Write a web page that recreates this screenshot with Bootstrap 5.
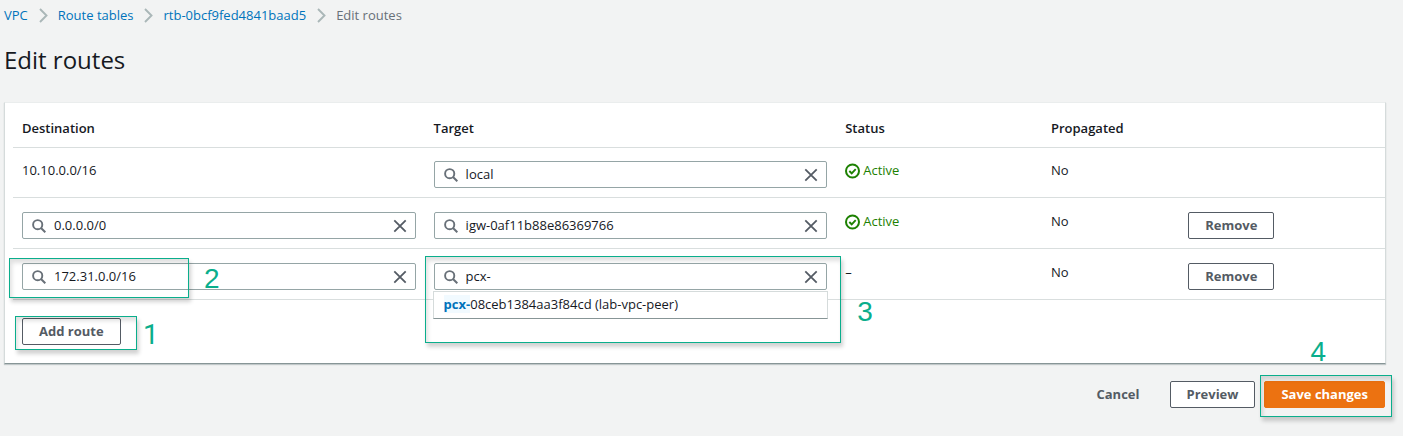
<!DOCTYPE html>
<html lang="en">
<head>
<meta charset="utf-8">
<meta name="viewport" content="width=device-width, initial-scale=1">
<title>Edit routes</title>
<link href="https://cdn.jsdelivr.net/npm/bootstrap@5.3.0/dist/css/bootstrap.min.css" rel="stylesheet">
<style>
  body { background: #f2f3f3; color: #16191f; font-family: "Open Sans", "Noto Sans", sans-serif; font-size: 13px; line-height: 18px; }
  .page { padding: 6px 17px 0 4px; }
  a { color: #0073bb; text-decoration: none; }
  .breadcrumb { --bs-breadcrumb-item-padding-x: 0; font-size: 13px; gap: 10px; }
  .breadcrumb-item + .breadcrumb-item::before { content: none; }
  .breadcrumb-item { display: flex; align-items: center; gap: 11px; }
  .breadcrumb-item.active { color: #687078; }
  .page-title { font-size: 24px; line-height: 36px; font-weight: 400; margin: 18px 0 24px; }
  .panel { background: #fff; border: 1px solid #d5dbdb; border-top-color: #eaeded; border-bottom-color: #879596; box-shadow: 0 1px 1px rgba(0,28,36,.2); padding-left: 8px; }
  .routes { --bs-table-bg: transparent; color: #16191f; table-layout: fixed; }
  .routes > :not(caption) > * > * { padding: 14px 9px 9px; border-bottom: 1px solid #d9dede; color: #16191f; }
  .routes > thead > tr > th { padding: 16px 9px 10px; font-weight: 600; }
  .routes > tbody > tr:first-child > td { padding-top: 13px; }
  .w-wide { width: 30%; } .w-mid { width: 15%; } .w-slim { width: 10%; }
  .search { border: 1px solid #95a5a6; border-radius: 2px; height: 27px; background: #fff; padding: 0 8px 0 9px; }
  .search input { border: 0; outline: 0; background: transparent; padding: 0 0 2px; color: #16191f; min-width: 0; line-height: 18px; }
  .search button { border: 0; background: transparent; padding: 0; display: flex; color: #545b64; }
  .btn { --bs-btn-font-size: 13px; --bs-btn-line-height: 18px; --bs-btn-font-weight: 700; --bs-btn-border-radius: 2px; --bs-btn-padding-y: 3px; --bs-btn-padding-x: 16px; --bs-btn-color: #545b64; height: 27px; padding-top: 2px; }
  .btn-plain { --bs-btn-border-color: #545b64; --bs-btn-bg: #fff; --bs-btn-hover-bg: #fafafa; }
  .btn-orange { --bs-btn-color: #fff; --bs-btn-bg: #ec7211; --bs-btn-border-color: #ec7211; --bs-btn-hover-bg: #eb5f07; --bs-btn-hover-color: #fff; }
  .add-row { padding: 18px 9px; }
  .actions { gap: 9px; padding: 17px 1px 18px 0; }
  .ok { color: #1d8102; gap: 2px; }
  .ok svg { margin-top: 2px; }
  .suggest { position: absolute; top: 28px; left: -1px; right: -1px; z-index: 2; background: #fff; border: 1px solid #d5dbdb; border-bottom-color: #879596; padding: 3px 10px 5px; }
  .suggest b { color: #0073bb; background: #f1faff; }
  .callout { position: absolute; border: 1px solid #0aae8c; box-shadow: 2px 4px 4px rgba(0,0,0,.18), inset 2px 4px 4px rgba(0,0,0,.12); pointer-events: none; z-index: 3; }
  .callout span { position: absolute; font: 28px/32px "Liberation Sans", Arial, sans-serif; color: #0aae8c; }
  .callout-add { inset: -2px -16px -5px -7px; }
  .callout-add span { left: 127px; top: 2px; font-family: Roboto, Arial, sans-serif; }
  .callout-dest { top: -5px; left: -13px; width: 180px; height: 40px; }
  .callout-dest span { left: 194px; top: 4px; }
  .callout-target { inset: -7px -14px -53px -9px; }
  .callout-target span { left: 100%; margin-left: 17px; top: 39px; }
  .callout-save { inset: -6px -7px -9px -4px; }
  .callout-save span { left: 49px; top: -40px; }
</style>
</head>
<body>
<svg class="d-none" aria-hidden="true">
  <symbol id="i-search" viewBox="0 0 14 14"><circle cx="5.7" cy="5.7" r="4.6" fill="none" stroke="#687078" stroke-width="1.9"/><path d="M9 9l4.3 4.3" stroke="#687078" stroke-width="2"/></symbol>
  <symbol id="i-close" viewBox="0 0 14 14"><path d="M1.3 1.3l11.4 11.4M12.7 1.3L1.3 12.7" stroke="#545b64" stroke-width="1.8"/></symbol>
  <symbol id="i-check" viewBox="0 0 16 16"><circle cx="7.5" cy="8" r="6.5" fill="none" stroke="#1d8102" stroke-width="2"/><path d="M4.3 8l2.4 2.3 4-4.2" fill="none" stroke="#1d8102" stroke-width="1.9"/></symbol>
  <symbol id="i-sep" viewBox="0 0 9 15"><path d="M1 1l6.5 6.5L1 14" fill="none" stroke="#aab7b8" stroke-width="1.9"/></symbol>
</svg>
<main class="page">
  <nav aria-label="Breadcrumb">
    <ol class="breadcrumb mb-0">
      <li class="breadcrumb-item"><a href="#">VPC</a><svg width="9" height="15"><use href="#i-sep"/></svg></li>
      <li class="breadcrumb-item"><a href="#">Route tables</a><svg width="9" height="15"><use href="#i-sep"/></svg></li>
      <li class="breadcrumb-item"><a href="#">rtb-0bcf9fed4841baad5</a><svg width="9" height="15"><use href="#i-sep"/></svg></li>
      <li class="breadcrumb-item active" aria-current="page">Edit routes</li>
    </ol>
  </nav>
  <h1 class="page-title">Edit routes</h1>

  <section class="panel">
    <table class="table routes mb-0">
      <thead>
        <tr><th class="w-wide" scope="col">Destination</th><th class="w-wide" scope="col">Target</th><th class="w-mid" scope="col">Status</th><th class="w-slim" scope="col">Propagated</th><th class="w-mid" scope="col"></th></tr>
      </thead>
      <tbody>
        <tr>
          <td>10.10.0.0/16</td>
          <td><div class="search d-flex align-items-center gap-2"><svg width="14" height="14"><use href="#i-search"/></svg><input class="flex-grow-1" type="text" aria-label="Target 1" value="local"><button type="button" aria-label="Clear target 1"><svg width="14" height="14"><use href="#i-close"/></svg></button></div></td>
          <td><div class="ok d-flex"><svg width="16" height="16"><use href="#i-check"/></svg><span>Active</span></div></td>
          <td>No</td>
          <td></td>
        </tr>
        <tr>
          <td><div class="search d-flex align-items-center gap-2"><svg width="14" height="14"><use href="#i-search"/></svg><input class="flex-grow-1" type="text" aria-label="Destination 2" value="0.0.0.0/0"><button type="button" aria-label="Clear destination 2"><svg width="14" height="14"><use href="#i-close"/></svg></button></div></td>
          <td><div class="search d-flex align-items-center gap-2"><svg width="14" height="14"><use href="#i-search"/></svg><input class="flex-grow-1" type="text" aria-label="Target 2" value="igw-0af11b88e86369766"><button type="button" aria-label="Clear target 2"><svg width="14" height="14"><use href="#i-close"/></svg></button></div></td>
          <td><div class="ok d-flex"><svg width="16" height="16"><use href="#i-check"/></svg><span>Active</span></div></td>
          <td>No</td>
          <td><button type="button" class="btn btn-plain d-block">Remove</button></td>
        </tr>
        <tr>
          <td><div class="position-relative"><div class="search d-flex align-items-center gap-2"><svg width="14" height="14"><use href="#i-search"/></svg><input class="flex-grow-1" type="text" aria-label="Destination 3" value="172.31.0.0/16"><button type="button" aria-label="Clear destination 3"><svg width="14" height="14"><use href="#i-close"/></svg></button></div><div class="callout callout-dest"><span>2</span></div></div></td>
          <td><div class="position-relative"><div class="search d-flex align-items-center gap-2"><svg width="14" height="14"><use href="#i-search"/></svg><input class="flex-grow-1" type="text" aria-label="Target 3" value="pcx-"><button type="button" aria-label="Clear target 3"><svg width="14" height="14"><use href="#i-close"/></svg></button></div><div class="suggest" role="listbox"><div role="option" aria-selected="false"><b>pcx-</b>08ceb1384aa3f84cd (lab-vpc-peer)</div></div><div class="callout callout-target"><span>3</span></div></div></td>
          <td>–</td>
          <td>No</td>
          <td><button type="button" class="btn btn-plain d-block">Remove</button></td>
        </tr>
      </tbody>
    </table>
    <div class="d-flex add-row">
      <div class="position-relative"><button type="button" class="btn btn-plain d-block">Add route</button><div class="callout callout-add"><span>1</span></div></div>
    </div>
  </section>

  <div class="actions d-flex justify-content-end">
    <button type="button" class="btn me-1">Cancel</button>
    <button type="button" class="btn btn-plain">Preview</button>
    <div class="position-relative"><button type="button" class="btn btn-orange d-block">Save changes</button><div class="callout callout-save"><span>4</span></div></div>
  </div>
</main>
<script src="https://cdn.jsdelivr.net/npm/bootstrap@5.3.0/dist/js/bootstrap.bundle.min.js"></script>
</body>
</html>
